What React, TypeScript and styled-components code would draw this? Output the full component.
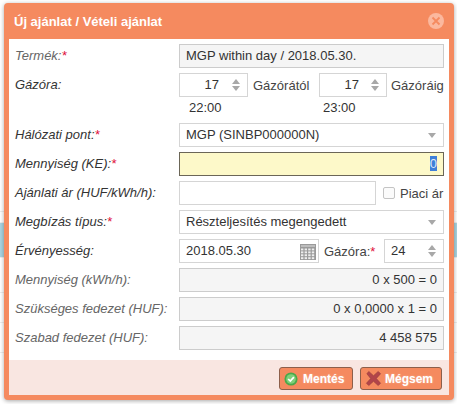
import React from 'react';
import styled, { createGlobalStyle } from 'styled-components';

const GlobalStyle = createGlobalStyle`
    html, body {
        margin: 0;
        padding: 0;
        background: #fff;
        font-family: 'Liberation Sans', Arial, sans-serif;
        font-size: 13px;
        color: #333;
    }
`;

const Page = styled.div`
    width: 457px;
    height: 404px;
    overflow: hidden;
    position: relative;
`;

// what is left of the page behind the dialog
const Backdrop = styled.div`
    height: 404px;
    display: flex;
    flex-direction: column;
`;

const BackRow = styled.div<{ $h: number; $bg?: string }>`
    height: ${(props) => props.$h}px;
    flex: none;
    box-sizing: border-box;
    background: ${(props) => props.$bg ?? '#fff'};
    border-bottom: 1px solid #ededed;
`;

const Dialog = styled.div`
    position: absolute;
    top: 3px;
    left: 4px;
    width: 450px;
    height: 397px;
    box-sizing: border-box;
    background: #f58a5f;
    border-radius: 4px;
    padding: 0 5px 5px;
    box-shadow: 0 1px 4px rgba(0, 0, 0, 0.35);
    display: flex;
    flex-direction: column;
`;

const Header = styled.div`
    height: 36px;
    flex: none;
    display: flex;
    align-items: center;
    justify-content: space-between;
    padding: 0 0 0 5px;
`;

const Title = styled.div`
    color: #fff;
    font-weight: bold;
    font-size: 13px;
`;

const Close = styled.div`
    width: 16px;
    height: 16px;
    border-radius: 50%;
    background: #fbb89e;
    margin: 0 5px 0 0;
    display: flex;
    align-items: center;
    justify-content: center;
`;

const Body = styled.div`
    flex: none;
    background: #fff;
    padding: 5px 5px 10px 6px;
    display: grid;
    grid-template-columns: 164px 265px;
    row-gap: 5px;
`;

const Label = styled.div<{ $muted?: boolean }>`
    height: 24px;
    line-height: 24px;
    font-style: italic;
    white-space: nowrap;
    color: ${(props) => (props.$muted ? '#666' : '#333')};
`;

const Star = styled.span`
    color: #e0103a;
`;

const Field = styled.div<{ $disabled?: boolean; $focus?: boolean; $right?: boolean; $w?: number }>`
    height: 24px;
    width: ${(props) => (props.$w ? `${props.$w}px` : 'auto')};
    flex: none;
    box-sizing: border-box;
    border: 1px solid ${(props) => (props.$focus ? '#6b6657' : props.$disabled ? '#ccc' : '#d5d5d5')};
    background: ${(props) => (props.$focus ? '#fdf9c9' : props.$disabled ? '#f5f5f5' : '#fff')};
    color: #333;
    padding: 0 6px;
    line-height: 22px;
    white-space: nowrap;
    position: relative;
    text-align: ${(props) => (props.$right ? 'right' : 'left')};
`;

const Row = styled.div`
    display: flex;
    align-items: center;
`;

const SideText = styled.div<{ $w: number; $pad?: number }>`
    width: ${(props) => props.$w}px;
    padding-left: ${(props) => props.$pad ?? 5}px;
    box-sizing: border-box;
    flex: none;
    color: #444;
    white-space: nowrap;
`;

const SpinValue = styled.div<{ $left?: boolean }>`
    width: ${(props) => (props.$left ? 'auto' : '33px')};
    text-align: ${(props) => (props.$left ? 'left' : 'right')};
`;

const Spin = styled.div`
    position: absolute;
    right: 7px;
    top: 5px;
    display: flex;
    flex-direction: column;
    gap: 2px;
`;

const ArrowUp = styled.div`
    width: 0;
    height: 0;
    border-left: 4px solid transparent;
    border-right: 4px solid transparent;
    border-bottom: 5px solid #a8a8a8;
`;

const ArrowDown = styled.div`
    width: 0;
    height: 0;
    border-left: 4px solid transparent;
    border-right: 4px solid transparent;
    border-top: 5px solid #a8a8a8;
`;

const SelectArrow = styled(ArrowDown)`
    position: absolute;
    right: 7px;
    top: 9px;
`;

const Hours = styled.div`
    grid-column: 2;
    height: 21px;
    margin-top: -5px;
    display: flex;
    line-height: 21px;
    color: #333;
`;

const Hour = styled.div<{ $w: number }>`
    width: ${(props) => props.$w}px;
    padding-left: 10px;
    box-sizing: border-box;
    flex: none;
`;

const Selected = styled.span`
    background: #3f7fd8;
    color: #dfe9f7;
`;

const Check = styled.div`
    width: 12px;
    height: 12px;
    box-sizing: border-box;
    border: 1px solid #c4c4c4;
    border-radius: 2px;
    background: #fbfbfb;
    margin: 0 5px 0 7px;
    flex: none;
`;

const CalendarSlot = styled.div`
    position: absolute;
    right: 2px;
    top: 4px;
    display: flex;
`;

const Footer = styled.div`
    flex: 1;
    background: #f9e6e1;
    display: flex;
    justify-content: flex-end;
    gap: 7px;
    padding: 7px 7px 0 0;
`;

const Button = styled.div<{ $w: number; $gap: number }>`
    width: ${(props) => props.$w}px;
    height: 23px;
    box-sizing: border-box;
    border: 1px solid #8d5f4b;
    border-radius: 3px;
    background: #f58a5f;
    color: #fff;
    font-weight: bold;
    font-size: 12px;
    display: flex;
    align-items: center;
    gap: ${(props) => props.$gap}px;
    padding-left: 4px;
    text-shadow: 0 0 2px rgba(255, 255, 255, 0.4);
`;

const Calendar = () => (
    <svg width="16" height="16" viewBox="0 0 16 16">
        <rect width="16" height="16" fill="#9a9a9a" />
        <rect x="1" y="1" width="14" height="2" fill="#bdbdbd" />
        {[0, 1, 2, 3].map((r) =>
            [0, 1, 2, 3].map((c) => (
                <rect key={`${r}-${c}`} x={1 + c * 3.6} y={4.5 + r * 2.9} width="2.4" height="1.9" fill="#eee" />
            ))
        )}
    </svg>
);

const Spinner = () => (
    <Spin>
        <ArrowUp />
        <ArrowDown />
    </Spin>
);

const App = () => {
    return (
        <Page>
            <GlobalStyle />
            <Backdrop>
                <BackRow $h={212} />
                <BackRow $h={11} />
                <BackRow $h={35} $bg="#a9d4e0" />
                <BackRow $h={35} />
                <BackRow $h={30} />
                <BackRow $h={30} />
            </Backdrop>
            <Dialog>
                <Header>
                    <Title>Új ajánlat / Vételi ajánlat</Title>
                    <Close>
                        <svg width="10" height="10" viewBox="0 0 10 10">
                            <path d="M1.5 1.5 L8.5 8.5 M8.5 1.5 L1.5 8.5" stroke="#f58a5f" strokeWidth="1.8" />
                        </svg>
                    </Close>
                </Header>
                <Body>
                    <Label $muted>Termék:<Star>*</Star></Label>
                    <Field $disabled>MGP within day / 2018.05.30.</Field>

                    <Label>Gázóra:</Label>
                    <Row>
                        <Field $w={69}><SpinValue>17</SpinValue><Spinner /></Field>
                        <SideText $w={71}>Gázórától</SideText>
                        <Field $w={68}><SpinValue>17</SpinValue><Spinner /></Field>
                        <SideText $w={57} $pad={4}>Gázóráig</SideText>
                    </Row>
                    <Hours>
                        <Hour $w={134}>22:00</Hour>
                        <Hour $w={100}>23:00</Hour>
                    </Hours>

                    <Label>Hálózati pont:<Star>*</Star></Label>
                    <Field>MGP (SINBP000000N)<SelectArrow /></Field>

                    <Label>Mennyiség (KE):<Star>*</Star></Label>
                    <Field $focus $right><Selected>0</Selected></Field>

                    <Label>Ajánlati ár (HUF/kWh/h):</Label>
                    <Row>
                        <Field $w={197} />
                        <Check />
                        <SideText $w={49} $pad={0}>Piaci ár</SideText>
                    </Row>

                    <Label>Megbízás típus:<Star>*</Star></Label>
                    <Field>Részteljesítés megengedett<SelectArrow /></Field>

                    <Label>Érvényesség:</Label>
                    <Row>
                        <Field $w={140}>2018.05.30<CalendarSlot><Calendar /></CalendarSlot></Field>
                        <SideText $w={65}>Gázóra:<Star>*</Star></SideText>
                        <Field $w={60}><SpinValue $left>24</SpinValue><Spinner /></Field>
                    </Row>

                    <Label $muted>Mennyiség (kWh/h):</Label>
                    <Field $disabled $right>0 x 500 = 0</Field>

                    <Label $muted>Szükséges fedezet (HUF):</Label>
                    <Field $disabled $right>0 x 0,0000 x 1 = 0</Field>

                    <Label $muted>Szabad fedezet (HUF):</Label>
                    <Field $disabled $right>4 458 575</Field>
                </Body>
                <Footer>
                    <Button $w={74} $gap={5}>
                        <svg width="14" height="14" viewBox="0 0 16 16">
                            <circle cx="8" cy="8" r="7.5" fill="#4aa84a" />
                            <circle cx="8" cy="8" r="5.5" fill="#7fd07a" />
                            <path d="M4.8 8 L7.2 10.4 L11.3 5.8" fill="none" stroke="#fff" strokeWidth="2" />
                        </svg>
                        Mentés
                    </Button>
                    <Button $w={82} $gap={3}>
                        <svg width="17" height="17" viewBox="0 0 18 18">
                            <path d="M2 4 L4 1.5 L9 6 L14 1.5 L16.5 4 L12 9 L16.5 14 L14 16.5 L9 12 L4 16.5 L1.5 14 L6 9 Z" fill="#b2444a" stroke="#8d3a3a" strokeWidth="0.6" />
                        </svg>
                        Mégsem
                    </Button>
                </Footer>
            </Dialog>
        </Page>
    );
};

export default App;
